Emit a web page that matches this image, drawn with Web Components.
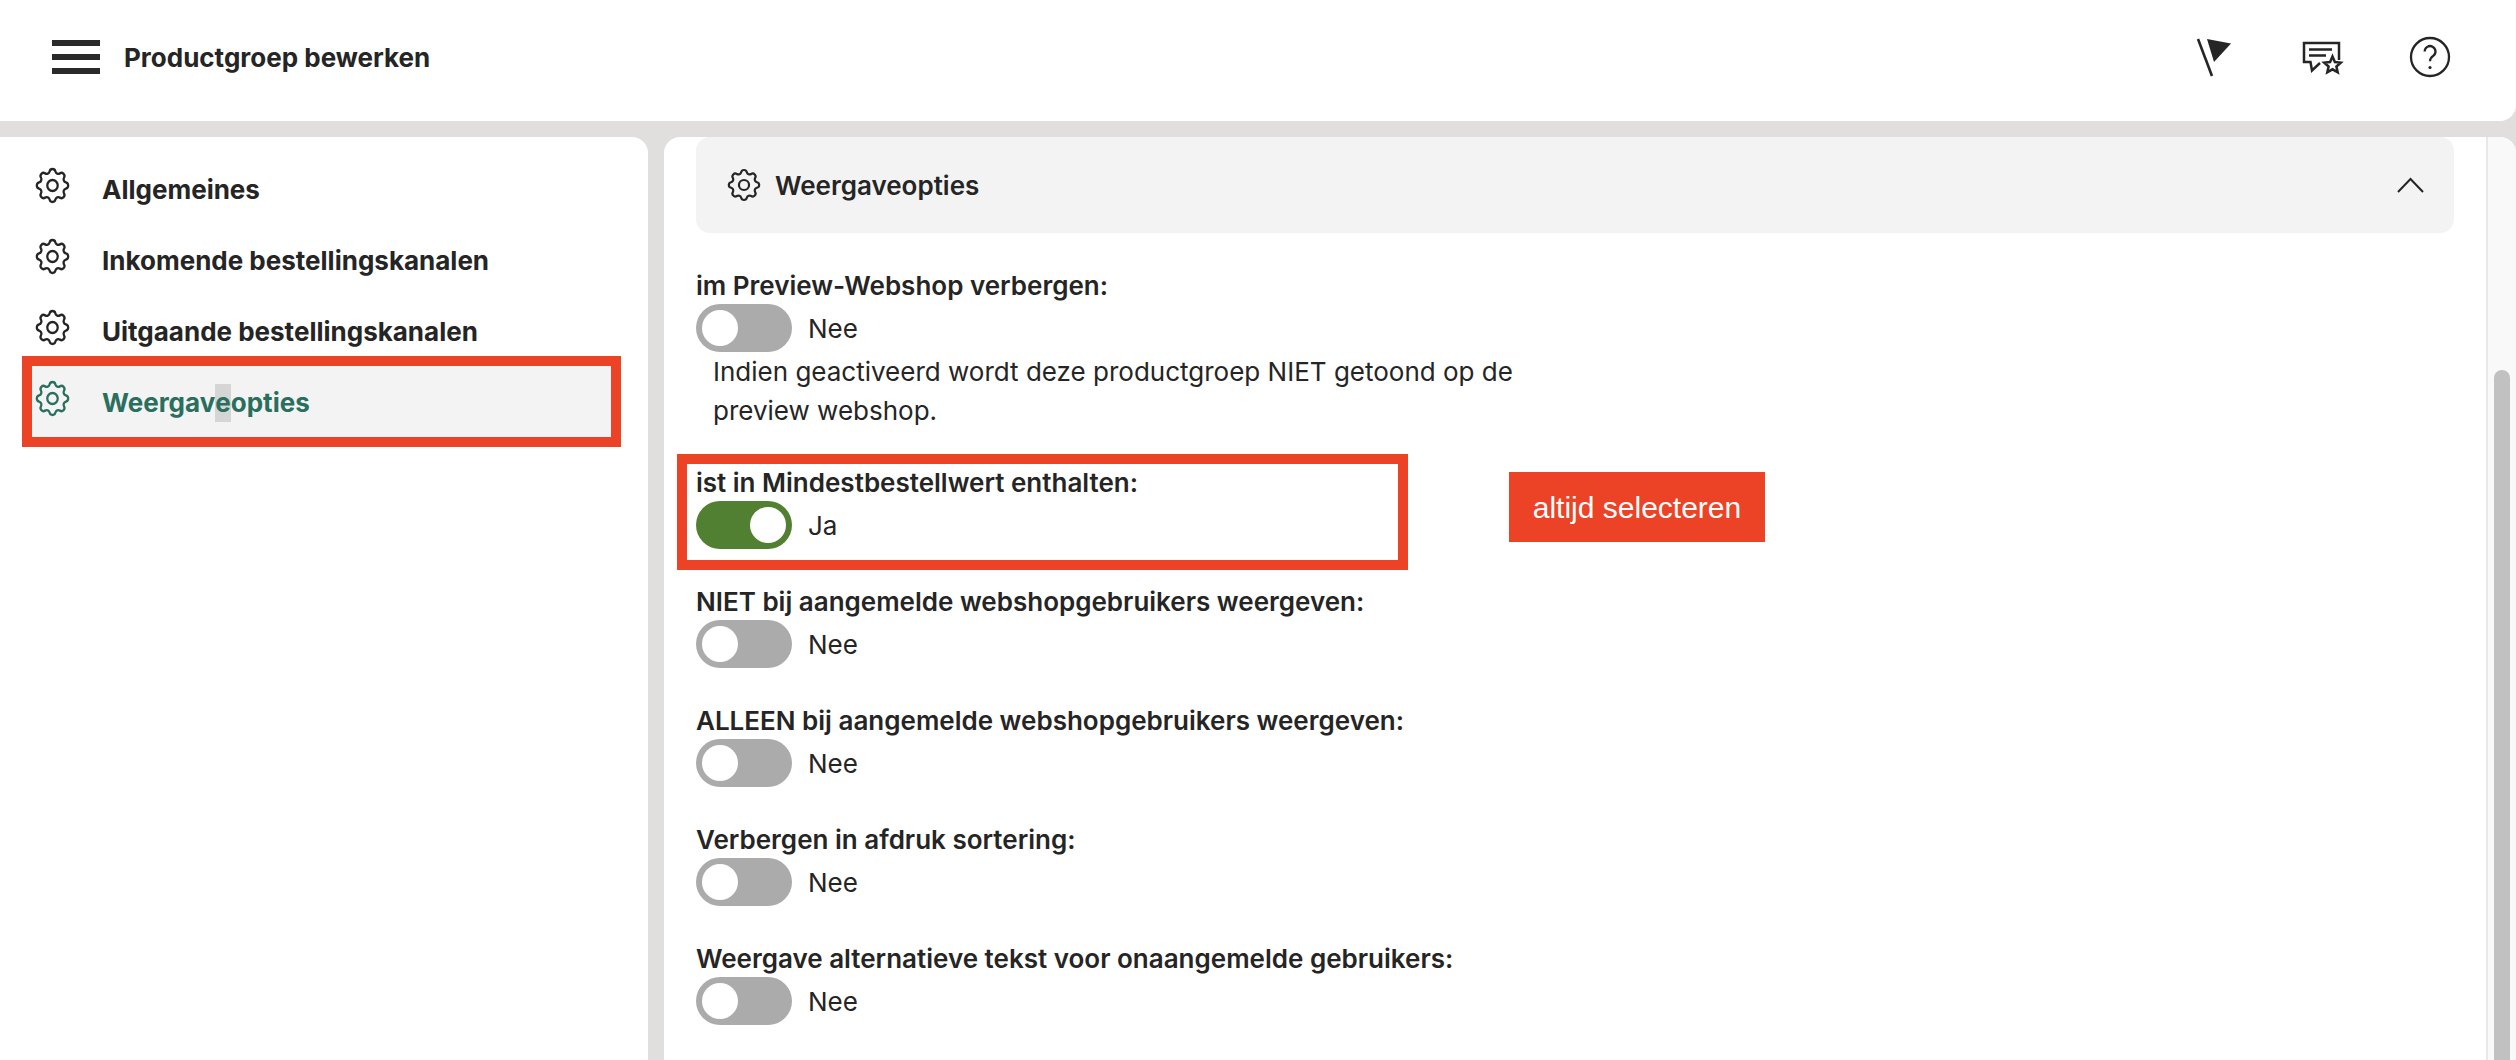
<!DOCTYPE html>
<html lang="nl">
<head>
<meta charset="utf-8">
<title>Productgroep bewerken</title>
<style>
html,body{margin:0;padding:0;height:1060px;overflow:hidden;background:#e0dfdd;font-family:Inter,"Liberation Sans",sans-serif;color:#252525;}
.sel{display:inline-block;line-height:38px;background:#d5d5d5;}
</style>
</head>
<body>
<app-shell>
  <top-bar slot="top" heading="Productgroep bewerken"></top-bar>
  <side-nav slot="side">
    <nav-item>Allgemeines</nav-item>
    <nav-item>Inkomende bestellingskanalen</nav-item>
    <nav-item>Uitgaande bestellingskanalen</nav-item>
    <nav-item active>Weergav<span class="sel">e</span>opties</nav-item>
    <annot-frame style="left:22px;top:219px;width:599px;height:91px"></annot-frame>
  </side-nav>
  <main-panel slot="main">
    <accordion-head>Weergaveopties</accordion-head>
    <option-row label="im Preview-Webshop verbergen:" value="Nee" note="Indien geactiveerd wordt deze productgroep NIET getoond op de preview webshop."></option-row>
    <option-row label="ist in Mindestbestellwert enthalten:" value="Ja" on></option-row>
    <option-row label="NIET bij aangemelde webshopgebruikers weergeven:" value="Nee"></option-row>
    <option-row label="ALLEEN bij aangemelde webshopgebruikers weergeven:" value="Nee"></option-row>
    <option-row label="Verbergen in afdruk sortering:" value="Nee"></option-row>
    <option-row label="Weergave alternatieve tekst voor onaangemelde gebruikers:" value="Nee"></option-row>
    <annot-frame slot="over" style="left:13px;top:317px;width:731px;height:116px"></annot-frame>
    <annot-tag slot="over" style="left:845px;top:335px">altijd selecteren</annot-tag>
  </main-panel>
</app-shell>
<script>
const GEAR = `<path d="M10.325 4.317c.426 -1.756 2.924 -1.756 3.35 0a1.724 1.724 0 0 0 2.573 1.066c1.543 -.94 3.31 .826 2.37 2.37a1.724 1.724 0 0 0 1.065 2.572c1.756 .426 1.756 2.924 0 3.35a1.724 1.724 0 0 0 -1.066 2.573c.94 1.543 -.826 3.31 -2.37 2.37a1.724 1.724 0 0 0 -2.572 1.065c-.426 1.756 -2.924 1.756 -3.35 0a1.724 1.724 0 0 0 -2.573 -1.066c-1.543 .94 -3.31 -.826 -2.37 -2.37a1.724 1.724 0 0 0 -1.065 -2.572c-1.756 -.426 -1.756 -2.924 0 -3.35a1.724 1.724 0 0 0 1.066 -2.573c-.94 -1.543 .826 -3.31 2.37 -2.37c1 .608 2.296 .07 2.572 -1.065z"/><circle cx="12" cy="12" r="3"/>`;
class GearIcon extends HTMLElement{
  constructor(){super();const r=this.attachShadow({mode:'open'});
  r.innerHTML=`<style>:host{display:block;width:var(--size,31px);height:var(--size,33px);flex:none;color:inherit}svg{display:block;width:100%;height:100%;overflow:visible;fill:none;stroke:currentColor;stroke-width:1.3;stroke-linejoin:round;stroke-linecap:round}</style><svg viewBox="3.1 3 17.8 18" preserveAspectRatio="none">${GEAR}</svg>`;}
}
customElements.define('gear-icon',GearIcon);

class AppShell extends HTMLElement{
  constructor(){super();const r=this.attachShadow({mode:'open'});
  r.innerHTML=`<style>
  :host{display:grid;grid-template-columns:648px 1fr;grid-template-rows:121px 1fr;column-gap:16px;row-gap:16px;height:1060px}
  ::slotted([slot=top]){grid-column:1 / -1}
  </style><slot name="top"></slot><slot name="side"></slot><slot name="main"></slot>`;}
}
customElements.define('app-shell',AppShell);

class TopBar extends HTMLElement{
  constructor(){super();const r=this.attachShadow({mode:'open'});
  r.innerHTML=`<style>
  :host{display:flex;align-items:center;background:#fff;border-radius:0 0 16px 0;padding:0 62px 7px 52px;font:700 26px/32px Inter,sans-serif;color:#252525}
  .burger{width:48px;height:34px;display:flex;flex-direction:column;justify-content:space-between;margin-right:24px}
  .burger i{display:block;height:6px;background:#2a2a2a}
  h1{font:inherit;margin:0;flex:1;padding-top:2px}
  .icons{display:flex;gap:60px}
  svg{display:block;width:48px;height:48px;fill:none;stroke:#252525}
  </style>
  <div class="burger"><i></i><i></i><i></i></div>
  <h1>${this.getAttribute('heading')}</h1>
  <div class="icons">
    <svg viewBox="0 0 48 48"><path d="M8 6L22 43" stroke-width="2.6"/><path d="M17 6L41 10.5L24 29Z" fill="#252525" stroke="none"/></svg>
    <svg viewBox="0 0 48 48" stroke-width="2.5"><path d="M41 27V10H6V29H12.5L14 37.5L22 30"/><path d="M11 16.500H34M11 22.500H28"/><path d="M34.500 23.500L36.900 29L42.800 29.600L38.400 33.500L39.700 39.300L34.500 36.300L29.300 39.300L30.600 33.500L26.200 29.600L32.100 29Z" fill="#fff" stroke-linejoin="miter"/></svg>
    <svg viewBox="0 0 48 48"><circle cx="24" cy="24" r="19" stroke-width="2.3"/><path d="M18.700 18.500a5.400 5.400 0 1 1 8.500 4.400c-2 1.400-3.200 2.600-3.200 5.400" stroke-width="2.300"/><circle cx="24" cy="34.500" r="1.600" fill="#252525" stroke="none"/></svg>
  </div>`;}
}
customElements.define('top-bar',TopBar);

class SideNav extends HTMLElement{
  constructor(){super();const r=this.attachShadow({mode:'open'});
  r.innerHTML=`<style>:host{display:block;position:relative;background:#fff;border-radius:0 16px 0 0;padding-top:16px;min-height:0}</style><slot></slot>`;}
}
customElements.define('side-nav',SideNav);

class NavItem extends HTMLElement{
  constructor(){super();const r=this.attachShadow({mode:'open'});
  r.innerHTML=`<style>
  :host{display:flex;align-items:center;height:71px;margin-left:32px;width:579px;padding-left:5px;box-sizing:border-box;gap:34px;font:700 26px/32px Inter,sans-serif;color:#252525}
  :host([active]){background:#f3f3f3;color:#2a6f5e}
  gear-icon{margin-bottom:6px}
  span{padding-top:2px}
  </style><gear-icon></gear-icon><span><slot></slot></span>`;}
}
customElements.define('nav-item',NavItem);

class AnnotFrame extends HTMLElement{
  constructor(){super();const r=this.attachShadow({mode:'open'});
  r.innerHTML=`<style>:host{display:block;position:absolute;box-sizing:border-box;border:10px solid #ec4226;pointer-events:none}</style>`;}
}
customElements.define('annot-frame',AnnotFrame);

class AnnotTag extends HTMLElement{
  constructor(){super();const r=this.attachShadow({mode:'open'});
  r.innerHTML=`<style>:host{display:flex;position:absolute;box-sizing:border-box;width:256px;height:70px;padding-top:2px;align-items:center;justify-content:center;background:#ec4226;color:#fff;font:400 30px "Liberation Sans",Arial,sans-serif}</style><slot></slot>`;}
}
customElements.define('annot-tag',AnnotTag);

class MainPanel extends HTMLElement{
  constructor(){super();const r=this.attachShadow({mode:'open'});
  r.innerHTML=`<style>
  :host{display:flex;position:relative;background:#fff;border-radius:16px 16px 0 0;overflow:hidden;min-height:0}
  .content{flex:1;padding:0 32px;min-width:0}
  .track{width:30px;flex:none;box-sizing:border-box;background:#f9f9f9;border-left:2px solid #e8e8e8;padding:233px 6px 0 6px}
  .thumb{height:800px;background:#c1c1c1;border-radius:8px}
  </style><div class="content"><slot></slot></div><div class="track"><div class="thumb"></div></div><slot name="over"></slot>`;}
}
customElements.define('main-panel',MainPanel);

class AccordionHead extends HTMLElement{
  constructor(){super();const r=this.attachShadow({mode:'open'});
  r.innerHTML=`<style>
  :host{display:flex;align-items:center;height:96px;box-sizing:border-box;background:#f3f3f3;border-radius:14px;padding:0 32px 0 33px;margin-bottom:35px;gap:16px;font:600 26px/32px Inter,sans-serif;color:#252525;--size:30px}
  span{flex:1;padding-top:2px}
  svg{display:block;width:25px;height:13px;fill:none;stroke:#252525;stroke-width:2;margin-right:-1px}
  </style><gear-icon></gear-icon><span><slot></slot></span><svg viewBox="0 0 25 13" overflow="visible"><path d="M0 13L12.500 0L25 13"/></svg>`;}
}
customElements.define('accordion-head',AccordionHead);

class ToggleSwitch extends HTMLElement{
  constructor(){super();const r=this.attachShadow({mode:'open'});
  r.innerHTML=`<style>
  :host{display:flex;align-items:center;width:96px;height:48px;padding:6px;box-sizing:border-box;border-radius:24px;background:#ababab;flex:none}
  :host([on]){background:#528032;justify-content:flex-end}
  i{display:block;width:36px;height:36px;border-radius:50%;background:#fff}
  </style><i></i>`;}
}
customElements.define('toggle-switch',ToggleSwitch);

class OptionRow extends HTMLElement{
  constructor(){super();const r=this.attachShadow({mode:'open'});
  const on=this.hasAttribute('on'),note=this.getAttribute('note');
  r.innerHTML=`<style>
  :host{display:block;margin-bottom:35px;font:400 26px/36px Inter,sans-serif;color:#252525}
  .l{font-weight:600;height:36px}
  .c{display:flex;align-items:center;gap:16px;height:48px}
  .c span{padding-top:2px}
  .n{padding-left:17px;width:830px;line-height:39px;height:78px}
  </style><div class="l">${this.getAttribute('label')}</div><div class="c"><toggle-switch ${on?'on':''}></toggle-switch><span>${this.getAttribute('value')}</span></div>${note?`<div class="n">${note}</div>`:''}`;}
}
customElements.define('option-row',OptionRow);
</script>
</body>
</html>
